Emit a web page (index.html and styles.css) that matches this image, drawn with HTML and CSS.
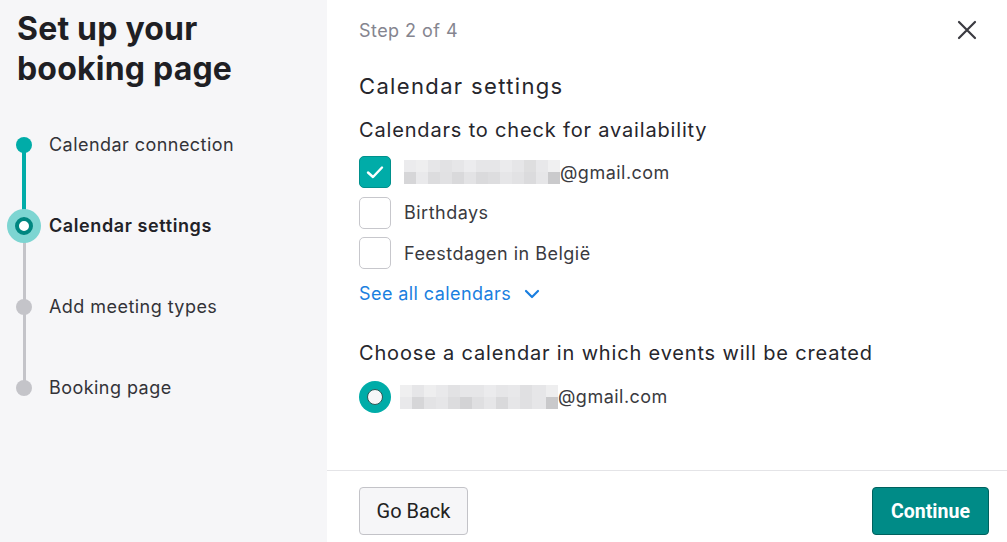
FILE: index.html
```html
<!DOCTYPE html>
<html lang="en">
<head>
<meta charset="utf-8">
<title>Set up your booking page</title>
<link rel="stylesheet" href="styles.css">
</head>
<body>
<div class="app">
  <aside class="sidebar">
    <h1 class="title">Set up your booking page</h1>
    <ol class="steps">
      <li class="step done"><span class="dot"></span><span class="label">Calendar connection</span></li>
      <li class="step active"><span class="dot"></span><span class="label">Calendar settings</span></li>
      <li class="step"><span class="dot"></span><span class="label">Add meeting types</span></li>
      <li class="step last"><span class="dot"></span><span class="label">Booking page</span></li>
    </ol>
  </aside>
  <main class="main">
    <div class="content">
      <div class="topbar">
        <span class="stepcount">Step 2 of 4</span>
        <button class="close" aria-label="Close">
          <svg width="20" height="20" viewBox="0 0 20 20"><path d="M2 2 L18 18 M18 2 L2 18" stroke="#3a3a40" stroke-width="2.2" stroke-linecap="round"/></svg>
        </button>
      </div>
      <h2 class="h2">Calendar settings</h2>
      <h3 class="h3">Calendars to check for availability</h3>
      <ul class="list">
        <li class="row">
          <span class="check on"><svg width="20" height="16" viewBox="0 0 20 16"><path d="M3 8.5 L8 13 L17 3.5" fill="none" stroke="#fff" stroke-width="2.4" stroke-linecap="round" stroke-linejoin="round"/></svg></span>
          <span class="email"><svg class="blur" width="156" height="24" viewBox="0 0 156 24">
            <rect x="0" y="0" width="156" height="24" fill="#e6e6e8"/>
            <rect x="0" y="0" width="12" height="12" fill="#ebebed"/><rect x="12" y="0" width="12" height="12" fill="#eeeeef"/><rect x="36" y="0" width="12" height="12" fill="#e2e2e4"/><rect x="60" y="0" width="12" height="12" fill="#ececee"/><rect x="96" y="0" width="12" height="12" fill="#ebebed"/><rect x="120" y="0" width="12" height="12" fill="#dededf"/><rect x="132" y="0" width="12" height="12" fill="#e8e8ea"/><rect x="144" y="0" width="12" height="12" fill="#f0f0f1"/>
            <rect x="0" y="12" width="12" height="12" fill="#d6d6d8"/><rect x="12" y="12" width="12" height="12" fill="#e9e9eb"/><rect x="24" y="12" width="12" height="12" fill="#dcdcde"/><rect x="36" y="12" width="12" height="12" fill="#e1e1e3"/><rect x="48" y="12" width="12" height="12" fill="#d9d9db"/><rect x="60" y="12" width="12" height="12" fill="#e3e3e5"/><rect x="72" y="12" width="12" height="12" fill="#dadadc"/><rect x="84" y="12" width="12" height="12" fill="#dddddf"/><rect x="108" y="12" width="12" height="12" fill="#e2e2e4"/><rect x="120" y="12" width="12" height="12" fill="#dbdbdd"/><rect x="144" y="12" width="12" height="12" fill="#cacacc"/>
          </svg>@gmail.com</span>
        </li>
        <li class="row"><span class="check"></span><span class="text">Birthdays</span></li>
        <li class="row"><span class="check"></span><span class="text">Feestdagen in België</span></li>
      </ul>
      <a class="seeall" href="#">See all calendars
        <svg width="16" height="10" viewBox="0 0 16 10"><path d="M2 2 L8 8 L14 2" fill="none" stroke="#1a7fe0" stroke-width="2.2" stroke-linecap="round" stroke-linejoin="round"/></svg>
      </a>
      <h3 class="h3 second">Choose a calendar in which events will be created</h3>
      <div class="row radio-row">
        <span class="radio"><span class="radio-inner"></span></span>
        <span class="email"><svg class="blur" width="158" height="24" viewBox="0 0 158 24">
            <rect x="0" y="0" width="158" height="24" fill="#e6e6e8"/>
            <rect x="0" y="0" width="12" height="12" fill="#efeff0"/><rect x="24" y="0" width="12" height="12" fill="#eeeeef"/><rect x="36" y="0" width="12" height="12" fill="#e9e9eb"/><rect x="48" y="0" width="12" height="12" fill="#e2e2e4"/><rect x="84" y="0" width="12" height="12" fill="#ebebed"/><rect x="108" y="0" width="12" height="12" fill="#e8e8ea"/><rect x="120" y="0" width="12" height="12" fill="#e0e0e2"/><rect x="146" y="0" width="12" height="12" fill="#eeeeef"/>
            <rect x="0" y="12" width="12" height="12" fill="#e9e9eb"/><rect x="12" y="12" width="12" height="12" fill="#d6d6d8"/><rect x="24" y="12" width="12" height="12" fill="#e3e3e5"/><rect x="48" y="12" width="12" height="12" fill="#dcdcde"/><rect x="60" y="12" width="12" height="12" fill="#d3d3d5"/><rect x="72" y="12" width="12" height="12" fill="#dfdfe1"/><rect x="96" y="12" width="12" height="12" fill="#d9d9db"/><rect x="120" y="12" width="12" height="12" fill="#e0e0e2"/><rect x="146" y="12" width="12" height="12" fill="#c9c9cb"/>
          </svg>@gmail.com</span>
      </div>
    </div>
    <footer class="footer">
      <button class="btn back">Go Back</button>
      <button class="btn primary">Continue</button>
    </footer>
  </main>
</div>
</body>
</html>
```
FILE: styles.css
```css
* { box-sizing: border-box; }
html, body { margin: 0; padding: 0; }
body {
  width: 1007px;
  height: 542px;
  overflow: hidden;
  font-family: Inter, "Noto Sans", sans-serif;
  color: #26262c;
  background: #fff;
}
.app { display: flex; height: 542px; }

.sidebar {
  width: 327px;
  flex: none;
  background: #f6f6f8;
  padding: 9px 0 0 17px;
}
.title {
  margin: 0;
  width: 260px;
  font-size: 32px;
  line-height: 40px;
  font-weight: 700;
  color: #1f1f24;
  letter-spacing: 0.2px;
}
.steps {
  list-style: none;
  margin: 56px 0 0 0;
  padding: 0;
}
.step {
  position: relative;
  height: 81px;
  display: flex;
  align-items: flex-start;
}
.step .label {
  font-size: 18px;
  line-height: 24px;
  margin-left: 32px;
  color: #333338;
  letter-spacing: 0.45px;
  position: relative;
  top: -12px;
  z-index: 1;
}
.step.active .label { font-weight: 600; color: #222227; letter-spacing: 0.6px; }
.step::before {
  content: "";
  position: absolute;
  left: 5.5px;
  top: 0;
  width: 3px;
  height: 81px;
  background: #c4c4c9;
}
.step.done::before { background: #00aca8; width: 4px; left: 5px; }
.step.last::before { display: none; }
.dot {
  position: absolute;
  left: -1px;
  top: -8px;
  width: 16px;
  height: 16px;
  border-radius: 50%;
  background: #c4c4c9;
}
.step.done .dot { background: #00aca8; }
.step.active .dot {
  left: -2px;
  top: -9px;
  width: 18px;
  height: 18px;
  background: #fff;
  border: 4px solid #008680;
  box-shadow: 0 0 0 8px #7dd5d2;
}

.main {
  flex: 1;
  display: flex;
  flex-direction: column;
  background: #fff;
}
.content {
  flex: 1;
  padding: 17px 0 0 32px;
}
.topbar {
  display: flex;
  justify-content: space-between;
  align-items: center;
  height: 26px;
  padding-right: 30px;
}
.stepcount {
  font-size: 18px;
  color: #85858f;
  letter-spacing: 0.45px;
}
.close {
  border: 0;
  background: none;
  padding: 0;
  width: 20px;
  height: 20px;
  display: flex;
  cursor: pointer;
}
.h2 {
  margin: 29px 0 0 0;
  font-size: 22px;
  line-height: 28px;
  font-weight: 400;
  color: #26262c;
  letter-spacing: 1.35px;
}
.h3 {
  margin: 17px 0 0 0;
  font-size: 20px;
  line-height: 26px;
  font-weight: 400;
  color: #26262c;
  letter-spacing: 0.83px;
}
.list {
  list-style: none;
  margin: 13px 0 0 0;
  padding: 0;
}
.row {
  display: flex;
  align-items: center;
  height: 32px;
  margin-bottom: 8.5px;
  font-size: 18px;
  color: #3a3a40;
  letter-spacing: 0.48px;
}
.check {
  width: 32px;
  height: 32px;
  flex: none;
  border: 1px solid #c7c7cc;
  border-radius: 5px;
  background: #fff;
  margin-right: 13px;
  display: flex;
  align-items: center;
  justify-content: center;
}
.check.on {
  background: #00aca8;
  border-color: #00908c;
}
.email {
  display: flex;
  align-items: center;
  color: #3a3a40;
}
.blur { display: block; }
.seeall {
  display: inline-flex;
  align-items: center;
  gap: 13px;
  margin-top: 2px;
  font-size: 18px;
  color: #1a7fe0;
  text-decoration: none;
  line-height: 28px;
  letter-spacing: 0.42px;
}
.h3.second { margin-top: 32px; }
.radio-row { margin-top: 15px; }
.radio {
  width: 32px;
  height: 32px;
  flex: none;
  border-radius: 50%;
  background: #00aca8;
  margin-right: 9px;
  display: flex;
  align-items: center;
  justify-content: center;
}
.radio-inner {
  width: 16px;
  height: 16px;
  border-radius: 50%;
  background: #f6f6f8;
  border: 1.5px solid #2a5856;
}

.footer {
  height: 72px;
  flex: none;
  border-top: 1px solid #e4e4e7;
  display: flex;
  justify-content: space-between;
  align-items: flex-start;
  padding: 16px 18px 0 32px;
}
.btn {
  height: 48px;
  border-radius: 4px;
  font-family: Roboto, "Liberation Sans", sans-serif;
  font-size: 20px;
  padding: 0;
  cursor: pointer;
}
.back {
  width: 109px;
  background: #f6f6f8;
  border: 1px solid #c3c3c8;
  color: #222;
}
.primary {
  width: 117px;
  background: #008b87;
  border: 1px solid #00615e;
  color: #fff;
  font-weight: 700;
  font-size: 19.5px;
}
```
